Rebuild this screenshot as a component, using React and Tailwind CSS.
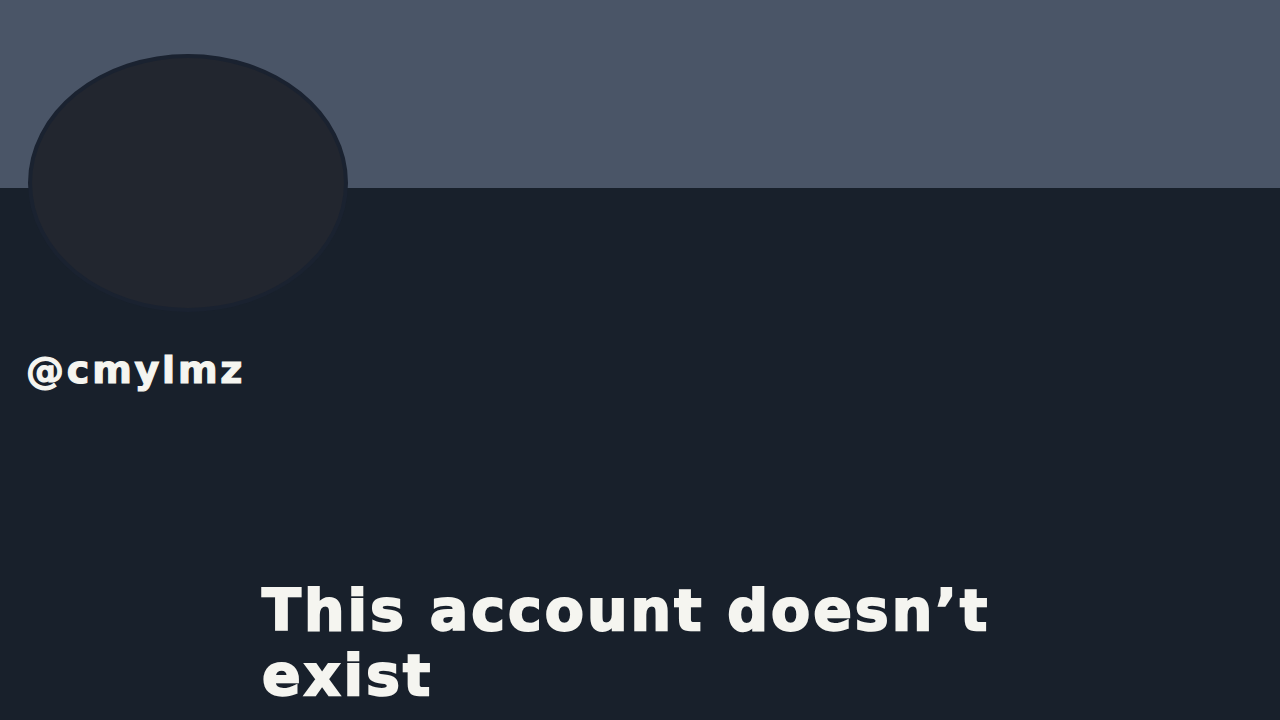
import React from "react";

const ProfilePage = () => {
  return (
    <div className="w-[1280px] h-[720px] overflow-hidden bg-[#18202b] flex flex-col" style={{ fontFamily: '"DejaVu Sans", sans-serif' }}>
      {/* banner */}
      <div className="h-[188px] w-full shrink-0 bg-[#4a5567]"></div>

      <div className="flex flex-col">
        {/* avatar */}
        <div className="ml-[28px] -mt-[134px] w-[320px] h-[258px] rounded-[50%] bg-[#22262f] border-4 border-[#1a2230]"></div>

        <div className="mt-[36px] ml-[26px] text-[38px] leading-[44px] font-bold tracking-[2.8px] text-[#f5f5f0] [-webkit-text-stroke:1.2px_#f5f5f0]">
          @cmylmz
        </div>

        <h1 className="mt-[186px] ml-[262px] w-[760px] text-[57px] leading-[65px] font-bold tracking-[3px] text-[#f5f5f0] [-webkit-text-stroke:2px_#f5f5f0]">
          This account doesn’t exist
        </h1>
      </div>
    </div>
  );
};

export default function App() {
  return <ProfilePage />;
}
